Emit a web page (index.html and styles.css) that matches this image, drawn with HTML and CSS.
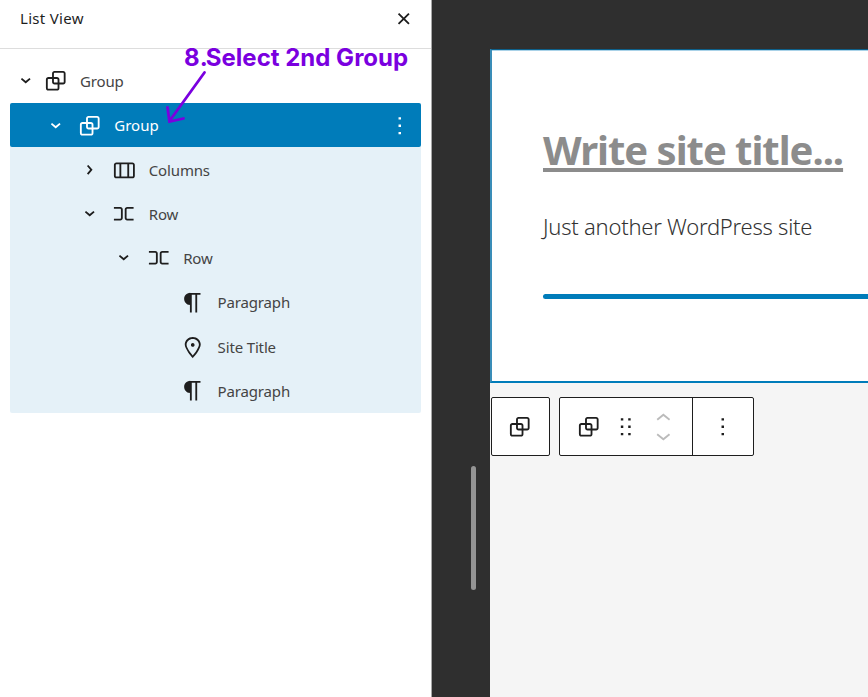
FILE: index.html
```html
<!DOCTYPE html>
<html lang="en">
<head>
<meta charset="utf-8">
<title>List View</title>
<link rel="stylesheet" href="styles.css">
</head>
<body>
<svg class="defs" width="0" height="0">
<symbol id="group" viewBox="0 0 24 24"><path d="M18 4h-7c-1.1 0-2 .9-2 2v3H6c-1.1 0-2 .9-2 2v7c0 1.1.9 2 2 2h7c1.1 0 2-.9 2-2v-3h3c1.1 0 2-.9 2-2V6c0-1.1-.9-2-2-2zm-4.5 14c0 .3-.2.5-.5.5H6c-.3 0-.5-.2-.5-.5v-7c0-.3.2-.5.5-.5h3V13c0 1.100.9 2 2 2h2.500v3zm0-4.500H11c-.3 0-.5-.2-.5-.5v-2.500H13c.3 0 .5.2.5.5v2.500zm5-.5c0 .3-.2.5-.5.5h-3V11c0-1.100-.9-2-2-2h-2.500V6c0-.3.2-.5.5-.5h7c.3 0 .5.2.5.5v7z"/></symbol>
<symbol id="row" viewBox="0 0 24 24"><path d="M9.200 6.500H4V8h5.200c.3 0 .5.2.5.5v7c0 .3-.2.5-.5.5H4v1.500h5.200c1.100 0 2-.9 2-2v-7c0-1.100-.9-2-2-2zM14.800 8H20V6.500h-5.200c-1.100 0-2 .9-2 2v7c0 1.100.9 2 2 2H20V16h-5.200c-.3 0-.5-.2-.5-.5v-7c0-.3.2-.5.5-.5z"/></symbol>
<symbol id="columns" viewBox="0 0 24 24"><path d="M19 6H6c-1.100 0-2 .9-2 2v9c0 1.100.9 2 2 2h13c1.100 0 2-.9 2-2V8c0-1.100-.9-2-2-2zm-4.100 1.500v10H10v-10h4.900zM5.500 17V8c0-.3.2-.5.5-.5h2.500v10H6c-.3 0-.5-.2-.5-.5zm14 0c0 .3-.2.5-.5.5h-2.600v-10H19c.3 0 .5.2.5.5v9z"/></symbol>
<symbol id="paragraph" viewBox="0 0 24 24"><path d="M18.300 4H9.900v-.1l-.9.2c-2.300.4-4 2.400-4 4.800s1.700 4.400 4 4.800l.7.1V20h1.500V5.500h2.900V20h1.500V5.500h2.700V4z"/></symbol>
<symbol id="marker" viewBox="0 0 24 24"><path d="M12 9c-.8 0-1.500.7-1.500 1.500S11.200 12 12 12s1.500-.7 1.500-1.500S12.800 9 12 9zm0-5c-3.600 0-6.500 2.800-6.500 6.200 0 .8.3 1.800.9 3.100.5 1.100 1.200 2.300 2 3.600.7 1 3 3.800 3.200 3.900l.4.5.4-.5c.2-.2 2.600-2.900 3.200-3.900.8-1.200 1.500-2.500 2-3.600.6-1.300.9-2.300.9-3.100C18.500 6.800 15.600 4 12 4zm4.300 8.700c-.5 1-1.100 2.200-1.900 3.400-.5.7-1.700 2.200-2.400 3-.7-.8-1.900-2.300-2.400-3-.8-1.200-1.400-2.300-1.900-3.300-.6-1.400-.7-2.200-.7-2.500 0-2.600 2.200-4.700 5-4.700s5 2.100 5 4.700c0 .2-.1 1-.7 2.400z"/></symbol>
<symbol id="chevron" viewBox="0 0 24 24"><path d="M10.862 8.040L14.280 12.029L10.862 16.017L9.723 15.040L12.305 12.029L9.723 9.017Z"/></symbol>
<symbol id="more" viewBox="0 0 24 24"><path d="M13 19h-2v-2h2v2zm0-6h-2v-2h2v2zm0-6h-2V5h2v2z"/></symbol>
<symbol id="drag" viewBox="0 0 24 24"><path d="M8 7h2V5H8v2zm0 6h2v-2H8v2zm0 6h2v-2H8v2zm6-14v2h2V5h-2zm0 8h2v-2h-2v2zm0 6h2v-2h-2v2z"/></symbol>
<symbol id="close" viewBox="0 0 24 24"><path d="M12 13.060l3.712 3.713 1.061-1.060L13.061 12l3.712-3.712-1.060-1.060L12 10.938 8.288 7.227l-1.061 1.060L10.939 12l-3.712 3.712 1.060 1.061L12 13.061z"/></symbol>
<symbol id="up" viewBox="6 7.500 12 6.500"><path d="M6.500 12.400L12 8l5.500 4.400-.9 1.200L12 10l-4.500 3.600-1-1.200z"/></symbol>
</svg>
<div class="editor">
  <aside class="sidebar">
    <header class="head"><span>List View</span><svg class="icon"><use href="#close"/></svg></header>
    <div class="tree">
      <div class="item root"><svg class="icon open"><use href="#chevron"/></svg><svg class="icon"><use href="#group"/></svg><span>Group</span></div>
      <div class="branch">
        <div class="item l1 selected"><svg class="icon open"><use href="#chevron"/></svg><svg class="icon"><use href="#group"/></svg><span>Group</span><svg class="icon options"><use href="#more"/></svg></div>
        <div class="item l2"><svg class="icon"><use href="#chevron"/></svg><svg class="icon"><use href="#columns"/></svg><span>Columns</span></div>
        <div class="item l2"><svg class="icon open"><use href="#chevron"/></svg><svg class="icon"><use href="#row"/></svg><span>Row</span></div>
        <div class="item l3"><svg class="icon open"><use href="#chevron"/></svg><svg class="icon"><use href="#row"/></svg><span>Row</span></div>
        <div class="item l4"><svg class="icon"><use href="#paragraph"/></svg><span>Paragraph</span></div>
        <div class="item l4"><svg class="icon"><use href="#marker"/></svg><span>Site Title</span></div>
        <div class="item l4"><svg class="icon"><use href="#paragraph"/></svg><span>Paragraph</span></div>
      </div>
    </div>
  </aside>
  <div class="gutter"><div class="scrollbar"></div></div>
  <main class="canvas">
    <section class="block">
      <h1 class="title">Write site title...</h1>
      <p class="tagline">Just another WordPress site</p>
      <div class="rule"></div>
    </section>
    <div class="toolbar">
      <div class="tools parent"><svg class="icon"><use href="#group"/></svg></div>
      <div class="tools main">
        <svg class="icon"><use href="#group"/></svg>
        <svg class="icon handle"><use href="#drag"/></svg>
        <div class="movers"><svg><use href="#up"/></svg><svg class="down"><use href="#up"/></svg></div>
        <div class="last"><svg class="icon"><use href="#more"/></svg></div>
      </div>
    </div>
  </main>
</div>
<div class="note">8<span class="dot">.</span>Select 2nd Group</div>
<svg class="arrow" viewBox="160 66 50 62"><path d="M204.500 72.500L169.500 121M167.500 107.500L169.500 121.500L183.500 118.500"/></svg>
</body>
</html>
```
FILE: styles.css
```css
body {
  margin: 0;
  overflow: hidden;
  background: #2f2f2f;
  color: #1e1e1e;
  font-family: "Noto Sans", "Open Sans", sans-serif;
}
.defs { position: absolute; }
svg { fill: currentColor; flex: none; display: block; }
.editor { display: flex; height: 697px; }
.icon { width: 29.500px; height: 29.500px; }

.sidebar {
  box-sizing: border-box;
  width: 432px;
  flex: none;
  background: #fff;
  border-right: 1px solid #a8a8a8;
}
.head {
  box-sizing: border-box;
  height: 49px;
  padding: 0 13px 11.500px 20px;
  border-bottom: 1px solid #ddd;
  display: flex;
  align-items: center;
  justify-content: space-between;
  font-size: 15px;
  letter-spacing: 0.300px;
}
.tree { padding: 10px 10.500px 0 10px; }
.item {
  box-sizing: border-box;
  height: 44.240px;
  display: flex;
  align-items: center;
  gap: 4.900px;
  font-size: 15px;
  letter-spacing: -0.150px;
}
.item span { margin-left: 5px; color: #444; }
.root { padding-left: 1px; gap: 0; }
.root span { margin-left: 10px; }
.branch { background: #e5f1f8; border-radius: 2px; }
.l1 { padding-left: 30.500px; }
.l2 { padding-left: 65px; }
.l3 { padding-left: 99.400px; }
.l4 { padding-left: 168.200px; }
.open { transform: rotate(90deg); }
.selected { background: #007cba; color: #fff; border-radius: 2px; }
.selected span { color: #fff; letter-spacing: 0; }
.options { margin-left: auto; margin-right: 6px; }

.gutter { width: 58px; flex: none; }
.scrollbar {
  width: 5px;
  height: 124px;
  margin: 466px 0 0 39px;
  border-radius: 3px;
  background: #949494;
}
.canvas {
  flex: 1;
  min-width: 0;
  margin-top: 49px;
  background: #f5f5f5;
}
.block {
  box-sizing: border-box;
  height: 334px;
  padding: 73px 0 0 51px;
  background: #fff;
  border: solid #007cba;
  border-width: 1px 0 2px 2px;
  border-left-color: #3a8db8;
  border-top-color: #0d5f89;
  box-shadow: inset 0 1px #a9d2e8;
}
.title {
  margin: 0;
  font-size: 40px;
  line-height: 54px;
  font-weight: 700;
  letter-spacing: -1.030px;
  color: #8c8c8c;
  text-decoration: underline;
  text-decoration-thickness: 4px;
  text-underline-offset: 3px;
  text-decoration-skip-ink: none;
  white-space: nowrap;
}
.tagline {
  margin: 33px 0 0;
  font-size: 22px;
  line-height: 32px;
  font-weight: 300;
  letter-spacing: -0.240px;
  color: #333;
  white-space: nowrap;
}
.rule {
  height: 5px;
  margin-top: 52px;
  background: #007cba;
  border-radius: 3px 0 0 3px;
}
.toolbar { display: flex; gap: 9px; padding: 14px 0 0 0.500px; }
.tools {
  box-sizing: border-box;
  height: 59px;
  display: flex;
  align-items: center;
  background: #fff;
  border: 1px solid #1e1e1e;
  border-radius: 2px;
}
.parent { width: 59.500px; justify-content: center; padding-right: 1.500px; }
.main { width: 194.500px; padding-left: 14px; }
.handle { margin-left: 7.500px; }
.movers {
  width: 14.750px;
  margin-left: 15.500px;
  display: flex;
  flex-direction: column;
  gap: 12px;
  color: #bbb;
}
.movers svg { width: 14.750px; height: 8px; }
.down { transform: rotate(180deg); }
.last {
  flex: 1;
  height: 57px;
  margin-left: 21.500px;
  border-left: 1px solid #1e1e1e;
  display: flex;
  align-items: center;
  justify-content: center;
}
.note {
  position: absolute;
  left: 184px;
  top: 43px;
  font: 700 24px/29px Inter, sans-serif;
  color: #7a00df;
  white-space: nowrap;
}
.dot { letter-spacing: -1.800px; }
.arrow {
  position: absolute;
  left: 160px;
  top: 66px;
  width: 50px;
  height: 62px;
  fill: none;
  stroke: #7a00df;
  stroke-width: 2.800;
  stroke-linecap: round;
}
```
